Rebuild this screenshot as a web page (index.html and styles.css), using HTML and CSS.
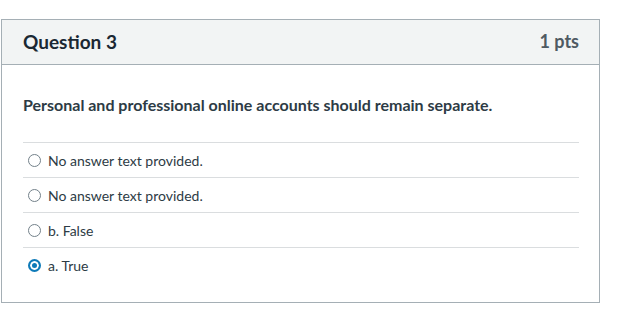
FILE: index.html
```html
<!DOCTYPE html>
<html lang="en">
  <head>
    <meta charset="UTF-8" />
    <meta name="viewport" content="width=device-width, initial-scale=1.0" />
    <title>Question 3</title>
    <link rel="stylesheet" href="styles.css">
  </head>
  <body>
    <div class="question">
      <div class="header">
        <h2>Question 3</h2>
        <span class="points">1 pts</span>
      </div>

      <div class="content">
        <p class="text">Personal and professional online accounts should remain separate.</p>

        <div class="answers">
          <label class="answer">
            <span class="radio"></span>
            No answer text provided.
          </label>
          <label class="answer">
            <span class="radio"></span>
            No answer text provided.
          </label>
          <label class="answer">
            <span class="radio"></span>
            b. False
          </label>
          <label class="answer">
            <span class="radio checked"></span>
            a. True
          </label>
        </div>
      </div>
    </div>
  </body>
</html>
```

FILE: styles.css
```css
body {
  margin: 0;
  padding: 19px 0 0 1px;
  font-family: Lato, "Noto Sans", sans-serif;
  color: #2d3b45;
  background-color: #fff;
}

.question {
  width: 597px;
  height: 282px;
  border: 1px solid #a5afb5;
}

.header {
  display: flex;
  justify-content: space-between;
  align-items: center;
  height: 42px;
  padding: 0 20px 2px 21px;
  background-color: #f2f4f4;
  border-bottom: 1px solid #a5afb5;
}

.header h2 {
  margin: 0;
  font-size: 19px;
  font-weight: bold;
  color: #1b2833;
}

.points {
  font-size: 18px;
  font-weight: bold;
  color: #4f5a62;
}

.content {
  padding: 0 20px 0 21px;
}

.text {
  margin: 0;
  padding: 30px 0 28px;
  font-size: 16px;
  font-weight: bold;
  color: #2d3b45;
}

.answer {
  display: flex;
  align-items: center;
  height: 34px;
  border-top: 1px solid #dadddf;
  font-size: 14px;
  color: #2d3b45;
}

.radio {
  box-sizing: border-box;
  width: 13px;
  height: 13px;
  margin: 0 7px 0 5px;
  border: 1px solid #73818a;
  border-radius: 50%;
}

.radio.checked {
  border: 2px solid #0e7ab8;
  background-color: #0e7ab8;
  box-shadow: inset 0 0 0 2px #fff;
}
```
